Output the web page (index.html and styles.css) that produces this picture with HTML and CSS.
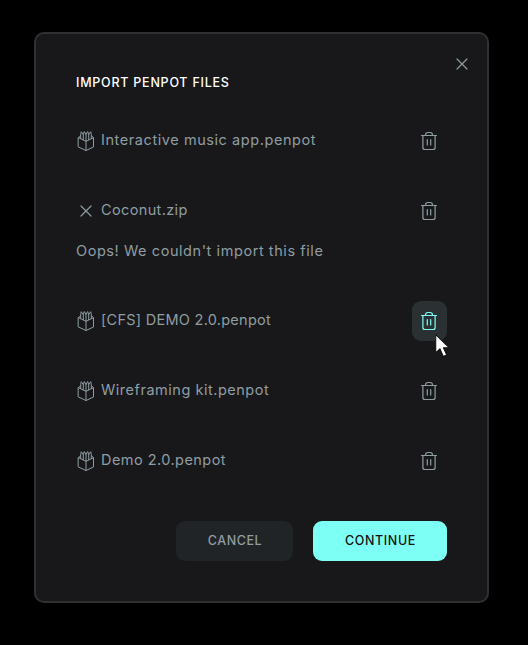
FILE: index.html
```html
<!DOCTYPE html>
<html lang="en">
<head>
<meta charset="utf-8">
<title>Import Penpot files</title>
<link rel="stylesheet" href="styles.css">
</head>
<body>
<svg class="defs" aria-hidden="true">
  <symbol id="trash" viewBox="0 0 18 20"><path d="M1.500 4.500H16.500M5.500 4.500V4Q5.500 1.500 8 1.500H10Q12.500 1.500 12.500 4V4.500M2.900 4.500V16.500Q2.900 18.500 4.900 18.500H13.100Q15.100 18.500 15.100 16.500V4.500M7.300 8.500V14M10.700 8.500V14"/></symbol>
  <symbol id="cross" viewBox="0 0 12 12"><path d="M1 1l10 10M11 1L1 11"/></symbol>
  <symbol id="box" viewBox="0 0 18 22"><path d="M1.500 7.700L9 11.300L16.500 7.700V17L9 20.500L1.500 17ZM9 11.300V20.500M1.500 7.700L3.300 6M16.500 7.700L14.700 6M3.700 8.500V4.800L4.200 1.700L6.300 4.500V9.700M6.300 4.500L7.300 1.500L9 4.500V10.500M9 4.500L10.700 1.500L11.700 4.500V9.700M11.700 4.500L13.800 1.700L14.300 4.800V8.500"/></symbol>
</svg>
<main class="dialog">
  <button class="close" aria-label="Close"><svg class="cross"><use href="#cross"/></svg></button>
  <h1 class="title">IMPORT PENPOT FILES</h1>
  <ul class="files">
    <li class="file"><svg class="box"><use href="#box"/></svg><span class="name music">Interactive music app.penpot</span><button class="delete" aria-label="Delete"><svg class="trash"><use href="#trash"/></svg></button></li>
    <li class="file failed"><span class="status"><svg class="cross"><use href="#cross"/></svg></span><span class="name coconut">Coconut.zip</span><button class="delete" aria-label="Delete"><svg class="trash"><use href="#trash"/></svg></button><p class="error">Oops! We couldn't import this file</p></li>
    <li class="file"><svg class="box"><use href="#box"/></svg><span class="name cfs">[CFS] DEMO 2.0.penpot</span><button class="delete active" aria-label="Delete"><svg class="trash"><use href="#trash"/></svg><svg class="pointer" viewBox="0 0 16 24"><path d="M1.500 1.500V19L5.500 15.200L8.800 22.500L12 21L8.900 14.200H14.500Z"/></svg></button></li>
    <li class="file"><svg class="box"><use href="#box"/></svg><span class="name wire">Wireframing kit.penpot</span><button class="delete" aria-label="Delete"><svg class="trash"><use href="#trash"/></svg></button></li>
    <li class="file"><svg class="box"><use href="#box"/></svg><span class="name demo">Demo 2.0.penpot</span><button class="delete" aria-label="Delete"><svg class="trash"><use href="#trash"/></svg></button></li>
  </ul>
  <footer class="actions"><button class="btn cancel">CANCEL</button><button class="btn continue">CONTINUE</button></footer>
</main>
</body>
</html>
```
FILE: styles.css
```css
* { box-sizing: border-box; }
body { margin: 0; height: 645px; overflow: hidden; padding: 32px 39px 0 34px; background: #000; font-family: Inter, sans-serif; }
button { border: 0; padding: 0; background: none; font: inherit; color: inherit; }
svg { display: block; fill: none; stroke: currentColor; stroke-linecap: round; stroke-linejoin: round; }
.defs { position: absolute; width: 0; height: 0; }
.dialog { position: relative; width: 455px; height: 571px; padding: 41px 40px 0; border: 2px solid #2e3031; border-radius: 10px; background: #18181a; color: #8f9da3; }
.close { position: absolute; top: 24px; right: 19px; }
.cross { width: 12px; height: 12px; stroke-width: 1.2; }
.title { margin: 0; height: 16px; font-size: 12.5px; line-height: 16px; font-weight: 500; letter-spacing: 0.76px; color: #fff; }
.files { list-style: none; margin: 30px 0 0; padding: 0; display: grid; gap: 30px; }
.file { display: grid; grid-template-columns: 20px 1fr 35px; column-gap: 5px; height: 40px; align-items: center; }
.failed { height: 80px; grid-template-rows: 40px 40px; }
.box { width: 18px; height: 22px; margin: 0 0 0 1px; stroke-width: 1; }
.status { display: grid; place-items: center; }
.name { font-size: 14.5px; line-height: 20px; white-space: nowrap; margin-top: -2px; }
.music { letter-spacing: 0.57px; }
.coconut { letter-spacing: 0.36px; }
.cfs { letter-spacing: 0.27px; }
.wire { letter-spacing: 0.52px; }
.demo { letter-spacing: 0.45px; }
.error { grid-column: 1 / -1; margin: 0; font-size: 14.5px; line-height: 20px; letter-spacing: 0.57px; }
.delete { position: relative; display: grid; place-items: center; width: 35px; height: 40px; border-radius: 9px; }
.trash { width: 18px; height: 20px; margin-right: 1px; stroke-width: 1.2; }
.active { background: #2b3133; color: #7efff5; }
.pointer { position: absolute; left: 22px; top: 32px; width: 17px; height: 25px; fill: #fff; stroke: #111; stroke-width: 1; }
.actions { display: flex; justify-content: flex-end; gap: 20px; margin-top: 40px; }
.btn { height: 40px; border-radius: 9px; font-size: 12.5px; font-weight: 500; letter-spacing: 0.6px; line-height: 16px; }
.cancel { width: 117px; padding-left: 1px; background: #212426; }
.continue { width: 134px; padding-left: 1px; background: #7efff5; color: #111; }
```
